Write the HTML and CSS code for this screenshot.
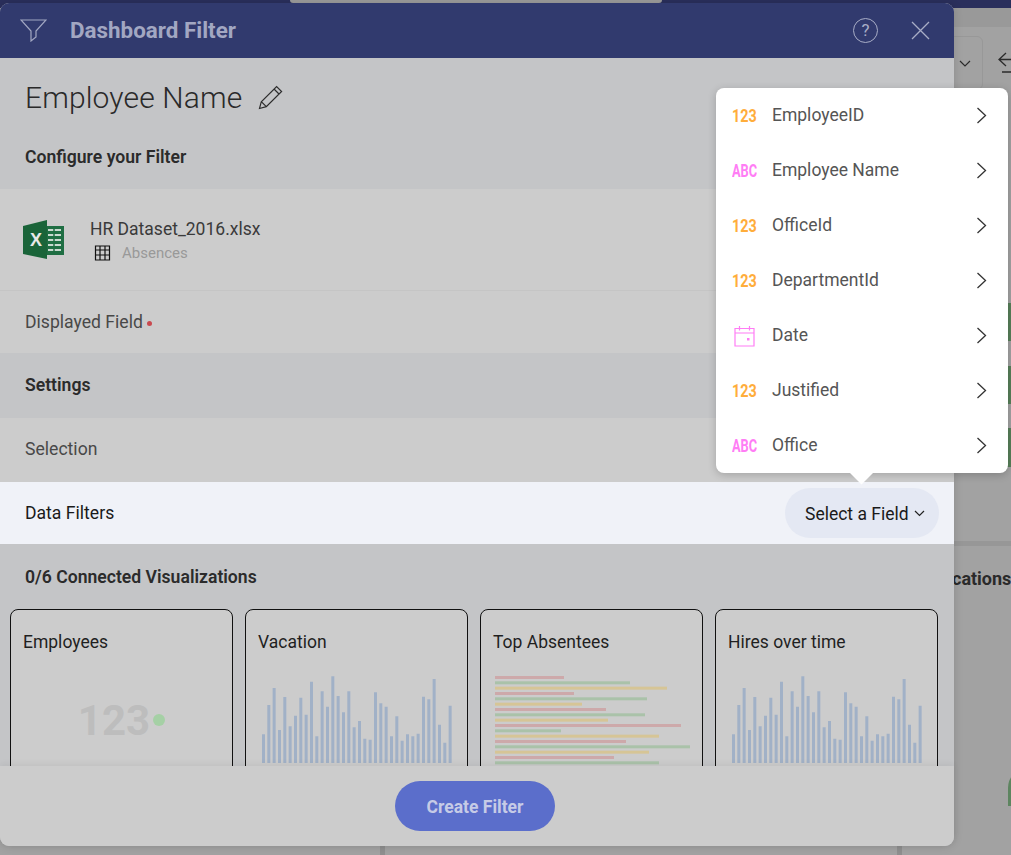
FILE: index.html
```html
<!doctype html>
<html lang="en">
<head>
    <meta charset="UTF-8">
    <title>Dashboard Filter</title>
    <link rel="stylesheet" href="styles.css">
</head>
<body>
<!-- dimmed app behind the dialog -->
<div class="behind">
    <div class="behind-top"></div>
    <div class="behind-band"></div>
    <div class="behind-notch"></div>
    <div class="behind-select">
        <svg width="12" height="7" viewBox="0 0 12 7"><path d="M1 1l5 5 5-5" fill="none" stroke="#2b2b2b" stroke-width="1.2"/></svg>
    </div>
    <svg class="behind-back" width="14" height="26" viewBox="0 0 14 26"><path d="M8 3L1 9.500l7 6.500M1 9.500h13M4 22h10" fill="none" stroke="#2b2b2b" stroke-width="1.3"/></svg>
    <div class="behind-green bg-1"></div>
    <div class="behind-green bg-2"></div>
    <div class="behind-green bg-3"></div>
    <div class="behind-line"></div>
    <div class="behind-text">cations</div>
    <div class="behind-arc"></div>
    <div class="behind-split s-1"></div>
    <div class="behind-split s-2"></div>
</div>

<div class="modal">
    <div class="modal-head">
        <svg class="filter-icon" width="27" height="23" viewBox="0 0 27 23"><path d="M1 1h25L16 12v6l-5 4V12z" fill="none" stroke="#a2a7c2" stroke-width="1.2"/></svg>
        <span class="modal-title">Dashboard Filter</span>
        <span class="help-icon">?</span>
        <svg class="close-icon" width="19" height="19" viewBox="0 0 19 19"><path d="M1 1l17 17M18 1L1 18" fill="none" stroke="#a8adc6" stroke-width="1.3"/></svg>
    </div>

    <div class="modal-body">
        <div class="name-row">
            <span class="name-text">Employee Name</span>
            <svg width="25" height="25" viewBox="0 0 25 25"><path d="M1.500 23.500l1.800-6.800L18.600 1.500l5 5L8.300 21.700zM3.300 16.700l5 5M16 4l5 5" fill="none" stroke="#2d2d2d" stroke-width="1.200"/></svg>
        </div>
        <div class="section-head configure">Configure your Filter</div>

        <div class="file-row">
            <svg width="42" height="40" viewBox="0 0 42 40">
                <rect x="20" y="6" width="21" height="29" fill="#1f6e43"/>
                <path d="M25 10h13M25 15h13M25 20h13M25 25h13M25 30h13" stroke="#c9d9cf" stroke-width="2"/>
                <path d="M31 8v25" stroke="#1f6e43" stroke-width="1.500"/>
                <path d="M0 6L24 0v39L0 34z" fill="#1a6439"/>
                <text x="7" y="26" class="excel-x">X</text>
            </svg>
            <div class="file-info">
                <div class="file-name">HR Dataset_2016.xlsx</div>
                <div class="file-sheet">
                    <svg width="17" height="16" viewBox="0 0 17 16"><path d="M1.500 1h14v14h-14zM1.500 5h14M1.500 10h14M6 1v14M11 1v14" fill="none" stroke="#111" stroke-width="1.200"/></svg>
                    <span>Absences</span>
                </div>
            </div>
        </div>

        <div class="field-row displayed">Displayed Field <i class="req-dot"></i></div>
        <div class="section-head settings">Settings</div>
        <div class="field-row selection"><span>Selection</span></div>
        <div class="field-row data-filters">
            <span>Data Filters</span>
            <div class="select-btn">
                Select a Field
                <svg width="11" height="7" viewBox="0 0 11 7"><path d="M1 1l4.500 4.500L10 1" fill="none" stroke="#222" stroke-width="1.200"/></svg>
            </div>
        </div>

        <div class="connected">
            <div class="connected-title">0/6 Connected Visualizations</div>
            <div class="cards">
                <div class="card">
                    <div class="card-title">Employees</div>
                    <div class="kpi"><span>123</span><i class="kpi-dot"></i></div>
                </div>
                <div class="card">
                    <div class="card-title">Vacation</div>
                    <svg class="chart-bars" width="196" height="92" viewBox="0 0 196 92"><use href="#bars"/></svg>
                </div>
                <div class="card">
                    <div class="card-title">Top Absentees</div>
                    <svg class="chart-rows" width="198" height="92" viewBox="0 0 198 92">
                        <rect y="0" width="69" height="3" fill="#cda9aa"/>
                        <rect y="5.330" width="135" height="3" fill="#aac2a9"/>
                        <rect y="10.660" width="172" height="3" fill="#d6c596"/>
                        <rect y="16" width="79" height="3" fill="#cda9aa"/>
                        <rect y="21.330" width="152" height="3" fill="#aac2a9"/>
                        <rect y="26.660" width="87" height="3" fill="#d6c596"/>
                        <rect y="32" width="111" height="3" fill="#cda9aa"/>
                        <rect y="37.330" width="150" height="3" fill="#aac2a9"/>
                        <rect y="42.660" width="113" height="3" fill="#d6c596"/>
                        <rect y="48" width="186" height="3" fill="#cda9aa"/>
                        <rect y="53.330" width="66" height="3" fill="#aac2a9"/>
                        <rect y="58.660" width="164" height="3" fill="#d6c596"/>
                        <rect y="64" width="131" height="3" fill="#cda9aa"/>
                        <rect y="69.330" width="195" height="3" fill="#aac2a9"/>
                        <rect y="74.660" width="154" height="3" fill="#d6c596"/>
                        <rect y="80" width="119" height="3" fill="#cda9aa"/>
                        <rect y="85.330" width="164" height="3" fill="#aac2a9"/>
                    </svg>
                </div>
                <div class="card">
                    <div class="card-title">Hires over time</div>
                    <svg class="chart-bars" width="196" height="92" viewBox="0 0 196 92"><use href="#bars"/></svg>
                </div>
            </div>
        </div>
    </div>

    <div class="modal-foot">
        <div class="create-btn">Create Filter</div>
    </div>

    <!-- field picker -->
    <div class="picker">
        <div class="picker-row"><span class="type num">123</span><span class="picker-name">EmployeeID</span><svg class="chev" width="11" height="17" viewBox="0 0 11 17"><path d="M1.500 1l8 7.500-8 7.500" fill="none" stroke="#333" stroke-width="1.300"/></svg></div>
        <div class="picker-row"><span class="type str">ABC</span><span class="picker-name">Employee Name</span><svg class="chev" width="11" height="17" viewBox="0 0 11 17"><path d="M1.500 1l8 7.500-8 7.500" fill="none" stroke="#333" stroke-width="1.300"/></svg></div>
        <div class="picker-row"><span class="type num">123</span><span class="picker-name">OfficeId</span><svg class="chev" width="11" height="17" viewBox="0 0 11 17"><path d="M1.500 1l8 7.500-8 7.500" fill="none" stroke="#333" stroke-width="1.300"/></svg></div>
        <div class="picker-row"><span class="type num">123</span><span class="picker-name">DepartmentId</span><svg class="chev" width="11" height="17" viewBox="0 0 11 17"><path d="M1.500 1l8 7.500-8 7.500" fill="none" stroke="#333" stroke-width="1.300"/></svg></div>
        <div class="picker-row">
            <span class="type">
                <svg width="21" height="22" viewBox="0 0 21 22"><path d="M1 3.500h19v17.500H1zM1 8h19M5.500 1v4.500M15.500 1v4.500" fill="none" stroke="#ff7df5" stroke-width="1.200"/><rect x="13" y="13" width="2.500" height="2.500" fill="#ff7df5"/></svg>
            </span>
            <span class="picker-name">Date</span><svg class="chev" width="11" height="17" viewBox="0 0 11 17"><path d="M1.500 1l8 7.500-8 7.500" fill="none" stroke="#333" stroke-width="1.300"/></svg>
        </div>
        <div class="picker-row"><span class="type num">123</span><span class="picker-name">Justified</span><svg class="chev" width="11" height="17" viewBox="0 0 11 17"><path d="M1.500 1l8 7.500-8 7.500" fill="none" stroke="#333" stroke-width="1.300"/></svg></div>
        <div class="picker-row"><span class="type str">ABC</span><span class="picker-name">Office</span><svg class="chev" width="11" height="17" viewBox="0 0 11 17"><path d="M1.500 1l8 7.500-8 7.500" fill="none" stroke="#333" stroke-width="1.300"/></svg></div>
        <div class="picker-tip"></div>
    </div>
</div>

<svg class="defs" width="0" height="0">
    <symbol id="bars" viewBox="0 0 196 92" width="196" height="92">
        <path fill="#a1b1c7" d="M0 63.300h3V92H0zM5.330 34h3v58h-3zM10.660 17h3v75h-3zM16 59h3v33h-3zM21.330 26h3v66h-3zM26.660 55.300h3V92h-3zM32 44.700h3V92h-3zM37.330 26.700h3V92h-3zM42.660 43.700h3V92h-3zM48 10.700h3V92h-3zM53.330 65.300h3V92h-3zM58.660 20.300h3V92h-3zM64 35.700h3V92h-3zM69.330 5.300h3V92h-3zM74.660 25h3v67h-3zM80 41.300h3V92h-3zM85.330 20.300h3V92h-3zM90.660 56.300h3V92h-3zM96 50h3v42h-3zM101.330 67.700h3V92h-3zM106.660 68.700h3V92h-3zM112 21.300h3V92h-3zM117.330 32.300h3V92h-3zM122.660 35.700h3V92h-3zM128 65.300h3V92h-3zM133.330 45.300h3V92h-3zM138.660 69.700h3V92h-3zM144 63.300h3V92h-3zM149.330 65.300h3V92h-3zM154.660 62.700h3V92h-3zM160 25.700h3V92h-3zM165.330 28.300h3V92h-3zM170.660 8h3v84h-3zM176 53.700h3V92h-3zM181.330 71.700h3V92h-3zM186.660 34.700h3V92h-3z"/>
    </symbol>
</svg>
</body>
</html>
```

FILE: styles.css
```css
* {
    box-sizing: border-box;
}
html, body {
    height: 100%;
}
body {
    margin: 0;
    padding-top: 3px;
    overflow: hidden;
    background: #a2a2a2;
    font-family: Roboto, "Liberation Sans", sans-serif;
    color: #2c2c2c;
}
.defs {
    display: block;
    height: 0;
}

/* app behind */
.behind {
    position: absolute;
    inset: 0;
    overflow: hidden;
}
.behind-top {
    position: absolute;
    left: 0;
    right: 0;
    top: 0;
    height: 8px;
    background: #2a2f5c;
}
.behind-band {
    position: absolute;
    left: 0;
    right: 0;
    top: 8px;
    height: 19px;
    background: #999999;
}
.behind-notch {
    position: absolute;
    left: 290px;
    top: 0;
    width: 372px;
    height: 3px;
    background: #9c9c9c;
    border-radius: 0 0 4px 4px;
}
.behind-select {
    position: absolute;
    left: 930px;
    top: 36px;
    width: 53px;
    height: 54px;
    border: 1px solid #989898;
    border-radius: 6px;
    padding: 23px 0 0 28px;
}
.behind-select svg {
    display: block;
}
.behind-back {
    position: absolute;
    left: 998px;
    top: 50px;
}
.behind-green {
    position: absolute;
    left: 1000px;
    width: 11px;
    background: #577f59;
}
.bg-1 { top: 303px; height: 38px; }
.bg-2 { top: 366px; height: 38px; }
.bg-3 { top: 428px; height: 39px; }
.behind-line {
    position: absolute;
    left: 954px;
    right: 0;
    top: 541px;
    height: 5px;
    background: #979797;
}
.behind-text {
    position: absolute;
    left: 952px;
    top: 568px;
    font-size: 18px;
    font-weight: 700;
    line-height: 22px;
    color: #2a2a2a;
}
.behind-arc {
    position: absolute;
    left: 1008px;
    top: 770px;
    width: 30px;
    height: 36px;
    border-left: 3px solid #5d8560;
    border-radius: 50% 0 0 0;
}
.behind-split {
    position: absolute;
    top: 846px;
    bottom: 0;
    width: 5px;
    background: #8f8f8f;
}
.s-1 { left: 380px; }
.s-2 { left: 897px; }

/* dialog */
.modal {
    position: relative;
    width: 954px;
    height: 843px;
    display: flex;
    flex-direction: column;
    background: #c4c5c7;
    border-radius: 9px;
    box-shadow: 0 0 10px rgba(0, 0, 0, .14);
}
.modal-head {
    flex: none;
    height: 55px;
    display: flex;
    align-items: center;
    padding: 0 24px 0 20px;
    background: #313a6e;
    border-radius: 9px 9px 0 0;
}
.filter-icon {
    margin-right: 23px;
}
.modal-title {
    flex: 1;
    margin-top: -1px;
    font-size: 22.400px;
    font-weight: 700;
    color: #a2a7c2;
}
.help-icon {
    width: 25px;
    height: 25px;
    margin-right: 33px;
    border: 1.500px solid #a8adc6;
    border-radius: 50%;
    font-size: 17px;
    line-height: 22px;
    text-align: center;
    color: #a8adc6;
}
.modal-body {
    flex: 1;
    min-height: 0;
    overflow: hidden;
}
.name-row {
    height: 76px;
    display: flex;
    align-items: center;
    gap: 16px;
    padding: 2px 25px 0;
}
.name-text {
    font-size: 30px;
    font-weight: 300;
    letter-spacing: .14px;
    color: #2a2a2a;
}
.section-head {
    padding-left: 25px;
    font-size: 17.600px;
    font-weight: 600;
    color: #2b2b2b;
}
.configure {
    height: 55px;
    padding-top: 13px;
}
.file-row {
    height: 102px;
    display: flex;
    align-items: center;
    gap: 25px;
    padding: 0 23px;
    background: #cccccc;
    border-bottom: 1px solid #c5c5c5;
}
.excel-x {
    font-family: "Liberation Sans", sans-serif;
    font-size: 18px;
    font-weight: 700;
    fill: #e8e8e8;
}
.file-info {
    margin-top: 2px;
}
.file-name {
    font-size: 17.500px;
    font-weight: 400;
    color: #3a3a3a;
}
.file-sheet {
    display: flex;
    align-items: center;
    gap: 11px;
    margin-top: 5px;
    padding-left: 4px;
    font-size: 15px;
    color: #999;
}
.field-row {
    display: flex;
    align-items: center;
    padding-left: 25px;
    font-size: 17.600px;
    background: #cccccc;
    color: #484848;
}
.displayed {
    height: 62px;
    gap: 4px;
}
.req-dot {
    width: 5px;
    height: 5px;
    margin-top: 2px;
    border-radius: 50%;
    background: #c9494f;
}
.settings {
    height: 65px;
    line-height: 65px;
}
.selection {
    height: 64px;
}
.selection span {
    margin-top: -2px;
}
.data-filters {
    height: 62px;
    justify-content: space-between;
    padding-right: 15px;
    background: #f0f2f8;
    color: #1a1a1a;
}
.data-filters > span {
    margin-top: -1px;
}
.select-btn {
    display: flex;
    align-items: center;
    gap: 5px;
    height: 50px;
    width: 154px;
    padding: 1px 0 0 20px;
    border-radius: 25px;
    background: #e4e8f3;
    font-size: 17.500px;
    color: #1a1a1a;
}
.connected-title {
    height: 65px;
    padding: 23px 0 0 25px;
    font-size: 17.600px;
    font-weight: 600;
    color: #2b2b2b;
}
.cards {
    display: flex;
    gap: 12px;
    padding-left: 10px;
}
.card {
    width: 223px;
    height: 190px;
    flex: none;
    padding: 20px 12px 0;
    border: 1px solid #111;
    border-radius: 8px;
    background: #cccccc;
}
.card-title {
    height: 41px;
    font-size: 17.500px;
    line-height: 24px;
    color: #1f1f1f;
}
.kpi {
    display: flex;
    align-items: center;
    justify-content: center;
    gap: 3px;
    height: 98px;
}
.kpi span {
    font-size: 42px;
    font-weight: 700;
    color: #bdbdbd;
}
.kpi-dot {
    width: 12px;
    height: 12px;
    border-radius: 50%;
    background: #a5d0a5;
}
.chart-bars {
    display: block;
    margin-left: 4px;
}
.chart-rows {
    display: block;
    margin-top: 5px;
    margin-left: 2px;
}
.modal-foot {
    position: relative;
    flex: none;
    height: 80px;
    display: flex;
    align-items: center;
    justify-content: center;
    padding-right: 4px;
    background: #cccccc;
    border-radius: 0 0 9px 9px;
    box-shadow: 0 -2px 6px rgba(0, 0, 0, .06);
}
.create-btn {
    width: 160px;
    height: 50px;
    border-radius: 25px;
    background: #5b6ecb;
    font-size: 17.500px;
    font-weight: 700;
    line-height: 52px;
    text-align: center;
    color: #c6cbe6;
}

/* field picker */
.picker {
    position: absolute;
    left: 716px;
    top: 85px;
    width: 292px;
    border-radius: 8px;
    background: #fff;
    box-shadow: 0 2px 8px rgba(0, 0, 0, .2);
}
.picker-row {
    height: 55px;
    display: flex;
    align-items: center;
    padding: 0 21px 0 16px;
}
.type {
    flex: none;
    width: 25px;
    margin-right: 31px;
    font-size: 18px;
    font-weight: 700;
    white-space: nowrap;
}
.type svg {
    display: block;
    margin-left: 2px;
}
.num {
    color: #ffad3b;
    transform: scaleX(.8);
    transform-origin: left center;
}
.str {
    color: #ff7df5;
    transform: scaleX(.71);
    transform-origin: left center;
}
.picker-name {
    flex: 1;
    margin-left: -16px;
    font-size: 17.500px;
    color: #555;
    margin-top: -1px;
}
.picker-tip {
    position: absolute;
    left: 137px;
    bottom: -8px;
    width: 17px;
    height: 17px;
    background: #fff;
    transform: rotate(45deg);
}
```
